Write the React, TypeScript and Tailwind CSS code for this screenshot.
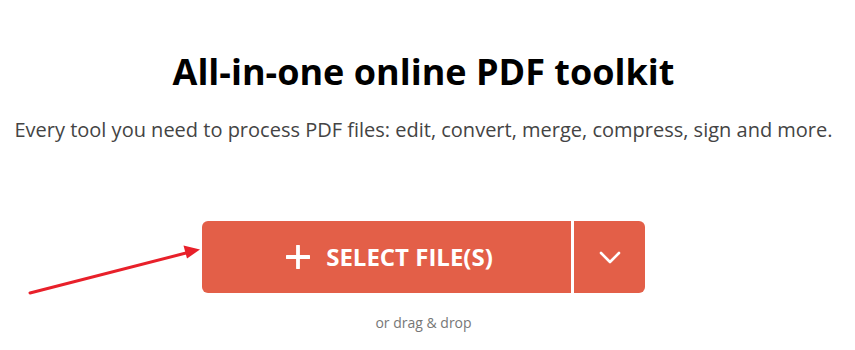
import React from "react";

function PlusIcon() {
  return (
    <svg width="24" height="24" viewBox="0 0 24 24" className="shrink-0">
      <path d="M12 1v22M1 12h22" stroke="#fff" strokeWidth="3.8" strokeLinecap="round" fill="none" />
    </svg>
  );
}

function Chevron() {
  return (
    <svg width="22" height="13" viewBox="0 0 22 13">
      <path d="M2 2l9 9 9-9" stroke="#fff" strokeWidth="2.6" strokeLinecap="round" strokeLinejoin="round" fill="none" />
    </svg>
  );
}

export default function App() {
  return (
    <div className="relative w-[855px] h-[350px] bg-white font-['Open_Sans',sans-serif] overflow-hidden">
      <div className="flex w-[847px] flex-col items-center">
        <h1 className="mt-[50px] text-[36px] leading-[43px] font-bold text-[#000]">All-in-one online PDF toolkit</h1>
        <p className="mt-[23px] text-[20px] leading-[28px] text-[#444]">
          Every tool you need to process PDF files: edit, convert, merge, compress, sign and more.
        </p>
        <div className="mt-[77px] flex h-[72px]">
          <button className="flex w-[369px] items-center justify-center gap-[16px] rounded-l-[6px] bg-[#e35f48] pl-[6px] text-white">
            <PlusIcon />
            <span className="text-[24px] leading-[32px] font-bold">SELECT FILE(S)</span>
          </button>
          <div className="w-[3px] bg-white" />
          <button className="flex w-[71px] items-center justify-center rounded-r-[6px] bg-[#e35f48]">
            <Chevron />
          </button>
        </div>
        <p className="mt-[20px] text-[14px] leading-[20px] text-[#777]">or drag &amp; drop</p>
      </div>
      <svg className="absolute left-0 top-0" width="855" height="350" viewBox="0 0 855 350">
        <line x1="30" y1="293" x2="188" y2="252.5" stroke="#e8202a" strokeWidth="3" strokeLinecap="round" />
        <path d="M200 249.5 L183.5 245.5 L187 258.5 Z" fill="#e8202a" />
      </svg>
    </div>
  );
}
